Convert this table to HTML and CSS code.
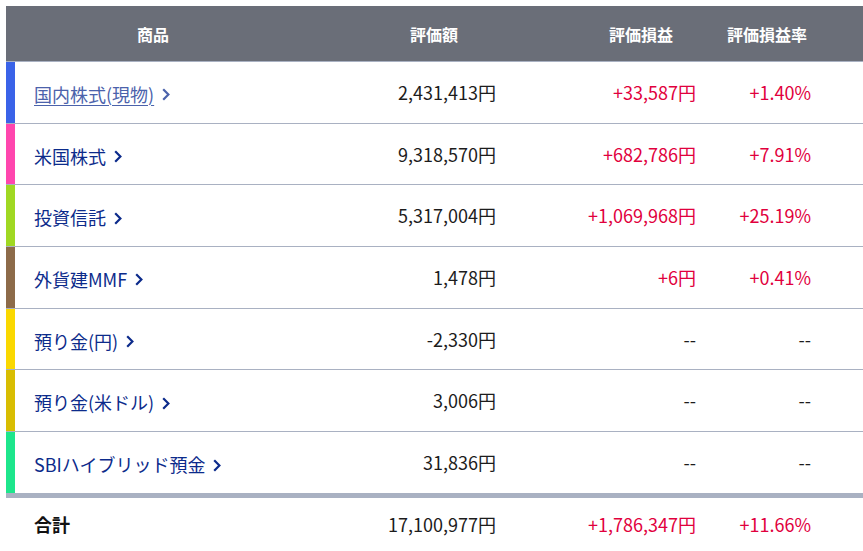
FILE: index.html
```html
<!DOCTYPE html>
<html lang="ja">
<head>
<meta charset="utf-8">
<title>保有資産</title>
<link rel="stylesheet" href="styles.css">
</head>
<body>
<div class="table">
  <div class="row head">
    <div class="cell c-name">商品</div>
    <div class="cell c-val">評価額</div>
    <div class="cell c-pl">評価損益</div>
    <div class="cell c-rate">評価損益率</div>
    <div class="cell c-rest"></div>
  </div>

  <div class="row item">
    <div class="cell c-name bar-blue"><a class="link visited" href="#">国内株式(現物)</a><span class="chev"><svg viewBox="0 0 8 13" width="8" height="13"><path d="M1.2 1.2 L6.4 6.5 L1.2 11.8" fill="none" stroke="currentColor" stroke-width="2.2"/></svg></span></div>
    <div class="cell c-val">2,431,413円</div>
    <div class="cell c-pl plus">+33,587円</div>
    <div class="cell c-rate plus">+1.40%</div>
    <div class="cell c-rest"></div>
  </div>

  <div class="row item">
    <div class="cell c-name bar-pink"><a class="link" href="#">米国株式</a><span class="chev"><svg viewBox="0 0 8 13" width="8" height="13"><path d="M1.2 1.2 L6.4 6.5 L1.2 11.8" fill="none" stroke="currentColor" stroke-width="2.2"/></svg></span></div>
    <div class="cell c-val">9,318,570円</div>
    <div class="cell c-pl plus">+682,786円</div>
    <div class="cell c-rate plus">+7.91%</div>
    <div class="cell c-rest"></div>
  </div>

  <div class="row item">
    <div class="cell c-name bar-lime"><a class="link" href="#">投資信託</a><span class="chev"><svg viewBox="0 0 8 13" width="8" height="13"><path d="M1.2 1.2 L6.4 6.5 L1.2 11.8" fill="none" stroke="currentColor" stroke-width="2.2"/></svg></span></div>
    <div class="cell c-val">5,317,004円</div>
    <div class="cell c-pl plus">+1,069,968円</div>
    <div class="cell c-rate plus">+25.19%</div>
    <div class="cell c-rest"></div>
  </div>

  <div class="row item">
    <div class="cell c-name bar-brown"><a class="link" href="#">外貨建MMF</a><span class="chev"><svg viewBox="0 0 8 13" width="8" height="13"><path d="M1.2 1.2 L6.4 6.5 L1.2 11.8" fill="none" stroke="currentColor" stroke-width="2.2"/></svg></span></div>
    <div class="cell c-val">1,478円</div>
    <div class="cell c-pl plus">+6円</div>
    <div class="cell c-rate plus">+0.41%</div>
    <div class="cell c-rest"></div>
  </div>

  <div class="row item">
    <div class="cell c-name bar-yellow"><a class="link" href="#">預り金(円)</a><span class="chev"><svg viewBox="0 0 8 13" width="8" height="13"><path d="M1.2 1.2 L6.4 6.5 L1.2 11.8" fill="none" stroke="currentColor" stroke-width="2.2"/></svg></span></div>
    <div class="cell c-val">-2,330円</div>
    <div class="cell c-pl">--</div>
    <div class="cell c-rate">--</div>
    <div class="cell c-rest"></div>
  </div>

  <div class="row item">
    <div class="cell c-name bar-gold"><a class="link" href="#">預り金(米ドル)</a><span class="chev"><svg viewBox="0 0 8 13" width="8" height="13"><path d="M1.2 1.2 L6.4 6.5 L1.2 11.8" fill="none" stroke="currentColor" stroke-width="2.2"/></svg></span></div>
    <div class="cell c-val">3,006円</div>
    <div class="cell c-pl">--</div>
    <div class="cell c-rate">--</div>
    <div class="cell c-rest"></div>
  </div>

  <div class="row item last">
    <div class="cell c-name bar-mint"><a class="link" href="#">SBIハイブリッド預金</a><span class="chev"><svg viewBox="0 0 8 13" width="8" height="13"><path d="M1.2 1.2 L6.4 6.5 L1.2 11.8" fill="none" stroke="currentColor" stroke-width="2.2"/></svg></span></div>
    <div class="cell c-val">31,836円</div>
    <div class="cell c-pl">--</div>
    <div class="cell c-rate">--</div>
    <div class="cell c-rest"></div>
  </div>

  <div class="row total">
    <div class="cell c-name total-label">合計</div>
    <div class="cell c-val">17,100,977円</div>
    <div class="cell c-pl plus">+1,786,347円</div>
    <div class="cell c-rate plus">+11.66%</div>
    <div class="cell c-rest"></div>
  </div>
</div>
</body>
</html>
```

FILE: styles.css
```css
html, body {
  margin: 0;
  padding: 0;
  background: #ffffff;
  overflow: hidden;
}

body {
  padding: 6px 0 0 6px;
  font-family: "Noto Sans CJK JP", "Noto Sans", sans-serif;
  font-size: 18px;
  color: #1c1c1c;
}

.table {
  width: 870px;
}

.row {
  display: grid;
  grid-template-columns: 294px 268px 146px 106px 1fr;
  box-sizing: border-box;
}

.cell {
  display: flex;
  align-items: center;
  white-space: nowrap;
}

.head {
  height: 56px;
  background: #6a6e78;
  border-bottom: 1px solid #a9b1c2;
  color: #ffffff;
  font-size: 16px;
  font-weight: bold;
}

.head .cell {
  justify-content: center;
}

.item {
  height: 61.7px;
  border-bottom: 1px solid #a9b1c2;
}

.item.last {
  height: 65.8px;
  border-bottom: 5px solid #a9b1c2;
}

.item .c-name {
  border-left: 9px solid transparent;
  padding-left: 19px;
  padding-top: 3px;
}

.item .c-val,
.total .c-val {
  justify-content: flex-end;
  padding-right: 72px;
}

.item .c-pl,
.total .c-pl {
  justify-content: flex-end;
  padding-right: 18px;
}

.item .c-rate,
.total .c-rate {
  justify-content: flex-end;
  padding-right: 9px;
}

.item .c-val,
.item .c-pl,
.item .c-rate {
  padding-bottom: 1px;
}

.link {
  color: #0c2b8b;
  text-decoration: none;
}

.link.visited {
  color: #4b62ab;
  text-decoration: underline;
  text-underline-offset: 3px;
  text-decoration-thickness: 1px;
}

.chev {
  display: inline-flex;
  margin-left: 8px;
  color: #0c2b8b;
  margin-top: 2px;
}

.visited + .chev {
  color: #4b62ab;
}

.plus {
  color: #e1003d;
}

.total {
  height: 52px;
}

.total .c-name {
  padding-left: 28px;
}

.total-label {
  font-weight: bold;
  color: #111111;
}

.bar-blue { border-left-color: #3a63e8 !important; }
.bar-pink { border-left-color: #ff46ae !important; }
.bar-lime { border-left-color: #a0d822 !important; }
.bar-brown { border-left-color: #8d6b49 !important; }
.bar-yellow { border-left-color: #fad800 !important; }
.bar-gold { border-left-color: #d8bd02 !important; }
.bar-mint { border-left-color: #1de68c !important; }
```
